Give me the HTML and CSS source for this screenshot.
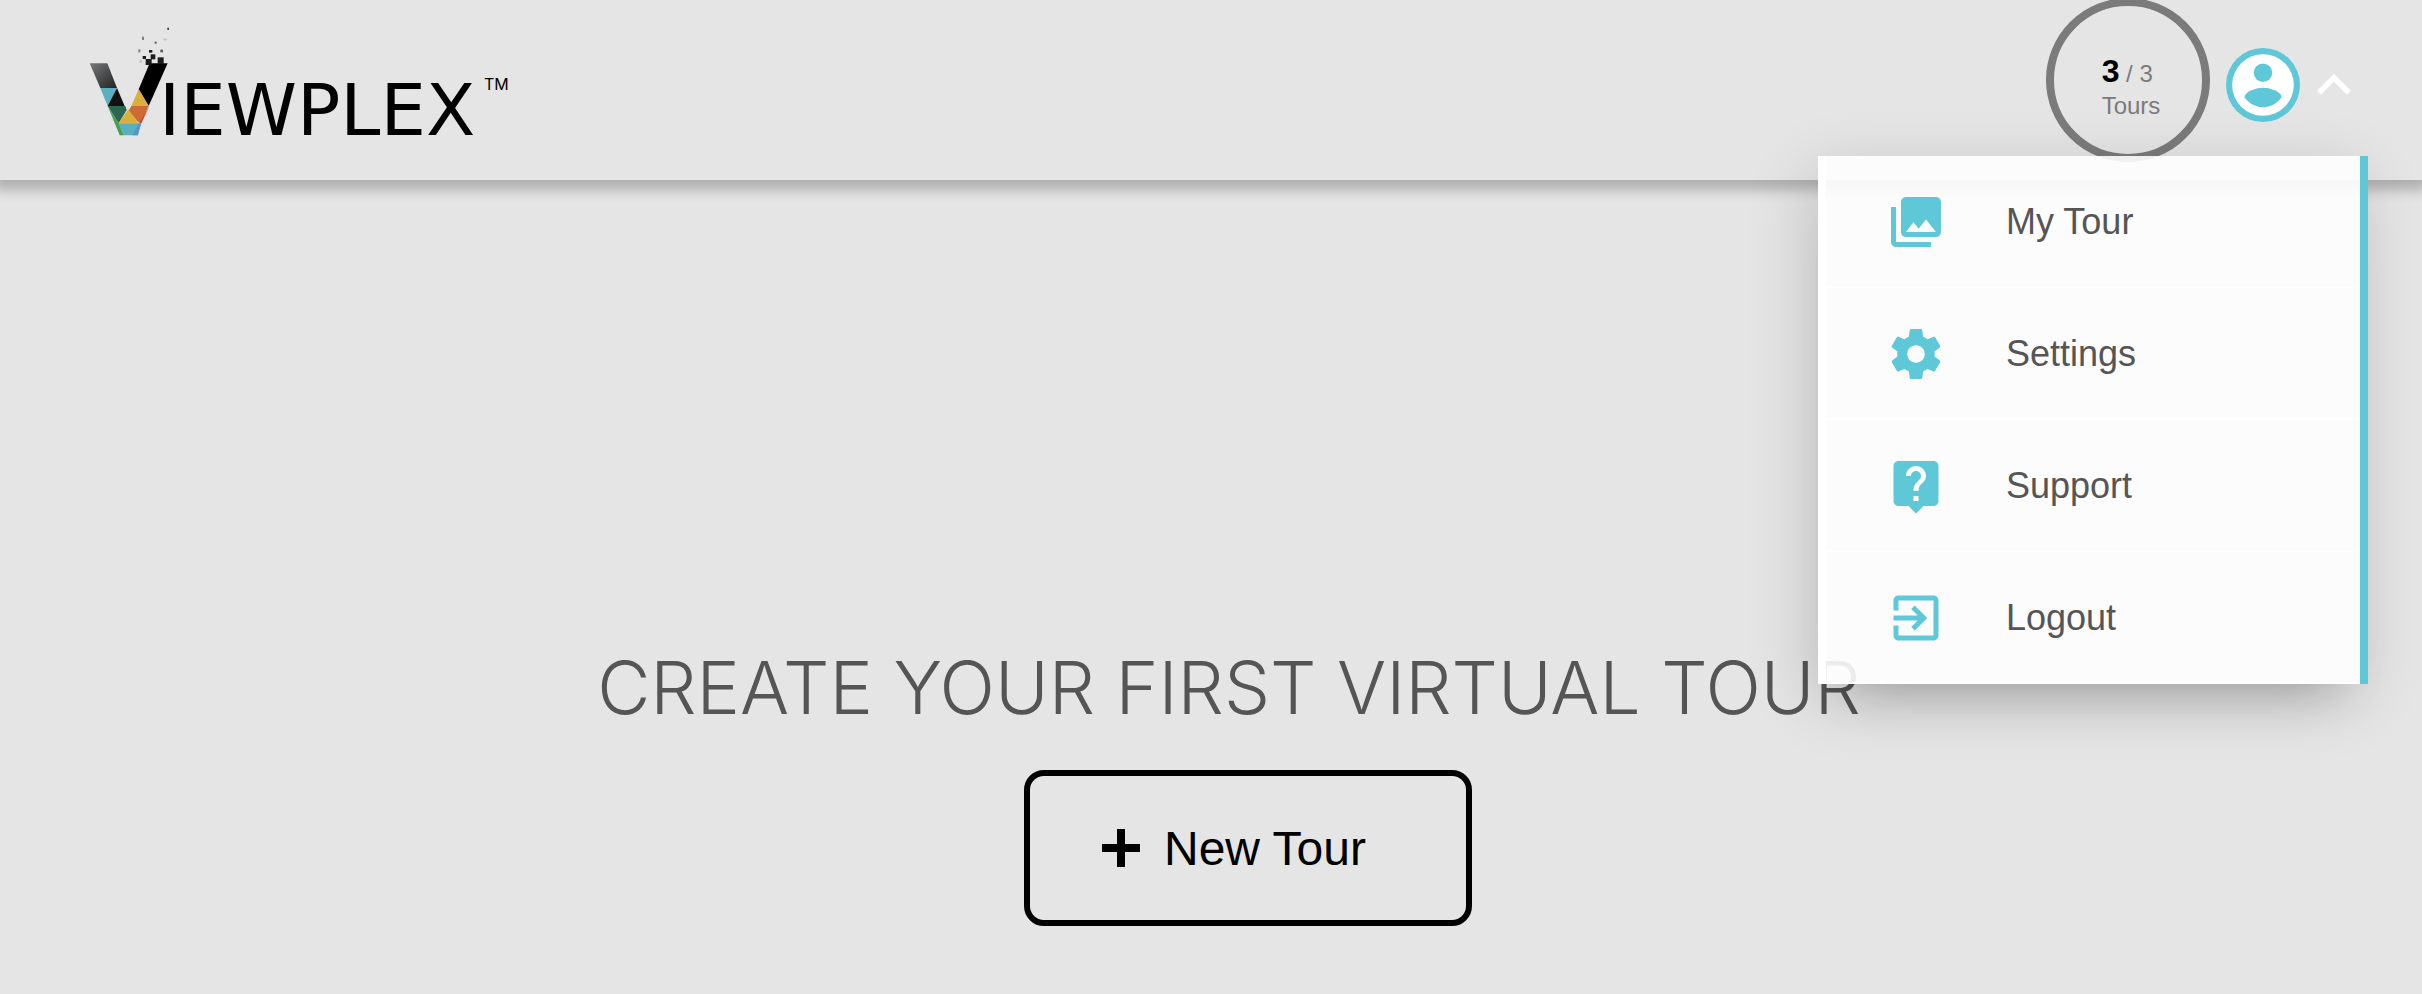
FILE: index.html
```html
<!DOCTYPE html>
<html lang="en">

<head>
  <meta charset="utf-8">
  <meta content="width=device-width, initial-scale=1.0" name="viewport">
  <title>Viewplex - My Tours</title>
  <link rel="stylesheet" href="styles.css">
</head>

<body class="tours-page">

  <!-- Header -->
  <header class="header">
    <a href="#home" class="logo" aria-label="Viewplex">
      <svg width="440" height="140" viewBox="0 0 440 140">
        <svg width="81" height="114" viewBox="54 42 243 342">
          <defs>
            <linearGradient id="arm" x1="0" y1="0" x2="1" y2="1">
              <stop offset="0" stop-color="#77787a" />
              <stop offset="1" stop-color="#222" />
            </linearGradient>
          </defs>
          <polygon points="59,160 112,160 141,234 91,234" fill="url(#arm)" />
          <polygon points="91,234 141,234 113,288" fill="#5aafc0" />
          <polygon points="141,234 164,288 113,288" fill="#111" />
          <polygon points="113,288 166,288 170,300 146,340" fill="#2b6650" />
          <polygon points="113,288 146,340 162,376 149,376" fill="#48a04f" />
          <polygon points="239,160 293,160 236,288 206,238" fill="#000" />
          <polygon points="206,238 236,288 184,288" fill="#dcae3c" />
          <polygon points="184,288 236,288 212,340 204,336 176,302" fill="#cc6b32" />
          <polygon points="238,288 214,340 208,340" fill="#d8352f" />
          <polygon points="175,298 205,340 145,340" fill="#dcae3c" />
          <polygon points="145,340 213,340 204,376 162,376" fill="#5aafc0" />
          <polygon points="214,340 203,376 187,376 206,340" fill="#5795c8" />
          <!-- loose pixels above the V -->
          <g fill="#1c1c1c">
            <rect x="227" y="147" width="18" height="18" />
            <rect x="263" y="142" width="18" height="20" />
            <rect x="242" y="133" width="14" height="15" />
            <rect x="218" y="138" width="10" height="9" />
            <rect x="237" y="120" width="10" height="8" />
            <rect x="271" y="119" width="8" height="8" opacity=".7" />
            <rect x="205" y="118" width="6" height="9" opacity=".5" />
            <rect x="209" y="151" width="7" height="7" opacity=".2" />
            <rect x="254" y="95" width="6" height="6" opacity=".7" />
            <rect x="216" y="80" width="6" height="10" opacity=".5" />
            <rect x="281" y="86" width="9" height="5" opacity=".2" />
            <rect x="292" y="53" width="6" height="7" opacity=".8" />
          </g>
        </svg>
        <text x="71" y="111" class="logo-name">IEWPLEX</text>
        <text x="396" y="66" class="logo-mark">TM</text>
      </svg>
    </a>

    <div class="header-actions">
      <div class="tour-count">
        <div>
          <div class="count-line"><b>3</b> / 3</div>
          <div class="count-line">Tours</div>
        </div>
      </div>
      <button type="button" class="avatar" aria-label="Account">
        <svg viewBox="0 0 24 24">
          <circle cx="12" cy="12" r="12" fill="#5ec8d8" />
          <circle cx="12" cy="12" r="10" fill="#fff" />
          <circle cx="12" cy="8" r="3" fill="#5ec8d8" />
          <path d="M12 19.2c-2.5 0-4.71-1.28-6-3.22.03-1.99 4-3.08 6-3.08 1.99 0 5.97 1.09 6 3.08-1.29 1.94-3.5 3.22-6 3.22z" fill="#5ec8d8" />
        </svg>
      </button>
      <button type="button" class="toggle" aria-label="Close menu" aria-expanded="true">
        <svg viewBox="0 0 24 24"><path d="M12 8l-6 6 1.41 1.41L12 10.83l4.59 4.58L18 14z" /></svg>
      </button>
    </div>

    <!-- Account Menu -->
    <nav class="menu">
      <a href="#tours">
        <svg viewBox="0 0 24 24"><path d="M22 16V4c0-1.1-.9-2-2-2H8c-1.1 0-2 .9-2 2v12c0 1.1.9 2 2 2h12c1.1 0 2-.9 2-2zm-11-4l2.03 2.71L16 11l4 5H8l3-4zM2 6v14c0 1.1.9 2 2 2h14v-2H4V6H2z" /></svg>
        My Tour
      </a>
      <a href="#settings">
        <svg viewBox="0 0 24 24"><path d="M19.43 12.98c.04-.32.07-.64.07-.98s-.03-.66-.07-.98l2.11-1.65c.19-.15.24-.42.12-.64l-2-3.46c-.12-.22-.39-.3-.61-.22l-2.49 1c-.52-.4-1.08-.73-1.69-.98l-.38-2.65C14.46 2.18 14.25 2 14 2h-4c-.25 0-.46.18-.49.42l-.38 2.65c-.61.25-1.17.59-1.69.98l-2.49-1c-.23-.09-.49 0-.61.22l-2 3.46c-.13.22-.07.49.12.64l2.11 1.65c-.04.32-.07.65-.07.98s.03.66.07.98l-2.11 1.65c-.19.15-.24.42-.12.64l2 3.46c.12.22.39.3.61.22l2.49-1c.52.4 1.08.73 1.69.98l.38 2.65c.03.24.24.42.49.42h4c.25 0 .46-.18.49-.42l.38-2.65c.61-.25 1.17-.59 1.69-.98l2.49 1c.23.09.49 0 .61-.22l2-3.46c.12-.22.07-.49-.12-.64l-2.11-1.65zM12 15.5c-1.93 0-3.5-1.57-3.5-3.5s1.57-3.5 3.5-3.5 3.5 1.57 3.5 3.5-1.57 3.5-3.5 3.5z" /></svg>
        Settings
      </a>
      <a href="#support">
        <svg viewBox="0 0 24 24"><path d="M19 2H5c-1.11 0-2 .9-2 2v14c0 1.1.89 2 2 2h4l3 3 3-3h4c1.1 0 2-.9 2-2V4c0-1.1-.9-2-2-2zm-6 16h-2v-2h2v2zm2.07-7.75l-.9.92C13.45 11.9 13 12.5 13 14h-2v-.5c0-1.1.45-2.1 1.17-2.83l1.24-1.26c.37-.36.59-.86.59-1.41 0-1.1-.9-2-2-2s-2 .9-2 2H8c0-2.21 1.79-4 4-4s4 1.79 4 4c0 .88-.36 1.68-.93 2.25z" /></svg>
        Support
      </a>
      <a href="#logout">
        <svg viewBox="0 0 24 24"><path d="M10.09 15.59L11.5 17l5-5-5-5-1.41 1.41L12.67 11H3v2h9.67l-2.58 2.59zM19 3H5c-1.11 0-2 .9-2 2v4h2V5h14v14H5v-4H3v4c0 1.1.89 2 2 2h14c1.1 0 2-.9 2-2V5c0-1.1-.9-2-2-2z" /></svg>
        Logout
      </a>
    </nav>
  </header>

  <!-- Empty State -->
  <main class="main">
    <h1>CREATE YOUR FIRST VIRTUAL TOUR</h1>
    <button type="button" class="new-tour">
      <svg viewBox="0 0 38 38"><path d="M15 0h8v15h15v8H23v15h-8V23H0v-8h15z" /></svg>
      New Tour
    </button>
  </main>

</body>

</html>
```

FILE: styles.css
```css
body {
    margin: 0;
    min-height: 100vh;
    background-color: #e5e5e5;
    font-family: "Liberation Sans", Arial, sans-serif;
    color: #555;
}

button {
    padding: 0;
    border: 0;
    background: none;
    font-family: inherit;
    cursor: pointer;
}

svg {
    display: block;
}

/* Header */
.header {
    position: relative;
    z-index: 1;
    display: flex;
    justify-content: space-between;
    align-items: flex-start;
    height: 180px;
    padding: 0 54px 0 88px;
    box-sizing: border-box;
    background-color: #e5e5e5;
    box-shadow: 0 4px 12px 6px rgba(0, 0, 0, 0.24);
}

.logo {
    padding-top: 24px;
}

.logo-name {
    font-family: "DejaVu Sans", sans-serif;
    font-size: 72px;
}

.logo-mark {
    font-family: Inter, sans-serif;
    font-size: 16px;
}

.header-actions {
    display: flex;
    align-items: center;
    height: 170px;
}

.tour-count {
    display: flex;
    justify-content: center;
    align-items: center;
    width: 164px;
    height: 164px;
    margin: 0 16px 10px 0;
    padding: 16px 0 0 6px;
    box-sizing: border-box;
    border: 8px solid #7b7b7b;
    border-radius: 50%;
    color: #7b7b7b;
}

.count-line {
    font-size: 24px;
    line-height: 32px;
}

.count-line b {
    font-size: 32px;
    color: #000;
}

.avatar svg {
    width: 74px;
    height: 74px;
}

.toggle svg {
    width: 68px;
    height: 68px;
    fill: #fff;
}

/* Account menu */
.menu {
    position: absolute;
    top: 156px;
    right: 54px;
    width: 550px;
    box-sizing: border-box;
    border-left: 8px solid #fff;
    border-right: 8px solid #5ec8d8;
    background-color: rgba(255, 255, 255, 0.89);
    box-shadow: 0 40px 50px -40px rgba(0, 0, 0, 0.25),
        -8px 16px 60px rgba(0, 0, 0, 0.16);
}

.menu a {
    display: flex;
    align-items: center;
    gap: 60px;
    height: 132px;
    padding: 2px 0 0 60px;
    box-sizing: border-box;
    border-bottom: 2px solid #fff;
    font-size: 36px;
    color: #555;
    text-decoration: none;
}

.menu svg {
    width: 60px;
    height: 60px;
    fill: #5ec8d8;
}

/* Empty state */
.main {
    display: flex;
    flex-direction: column;
    align-items: center;
    padding: 460px 0 0 36px;
}

h1 {
    margin: 0 0 34px;
    font-family: Inter, sans-serif;
    font-size: 73px;
    font-weight: 300;
    line-height: 96px;
}

.new-tour {
    display: flex;
    align-items: center;
    gap: 24px;
    width: 448px;
    height: 156px;
    margin-left: 38px;
    padding: 0 72px;
    box-sizing: border-box;
    border: 6px solid #000;
    border-radius: 20px;
    font-size: 48px;
    color: #000;
}

.new-tour svg {
    width: 38px;
    height: 38px;
}
```
